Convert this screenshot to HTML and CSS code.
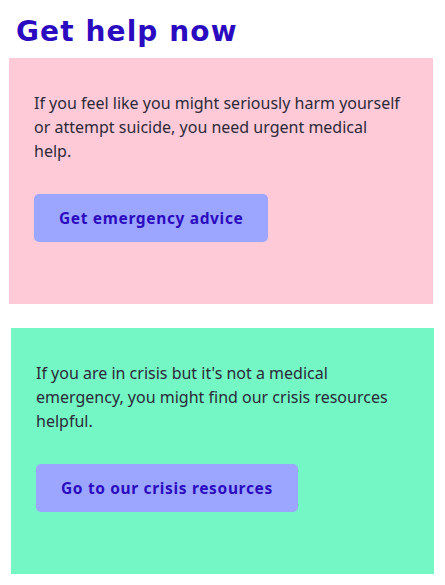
FILE: index.html
```html
<!DOCTYPE html>
<html lang="en">
<head>
<meta charset="utf-8">
<title>Get help now</title>
<link rel="stylesheet" href="styles.css">
</head>
<body>
<main class="page">
  <h1 class="title">Get help now</h1>
  <section class="card card-pink">
    <p class="card-text">If you feel like you might seriously harm yourself or attempt suicide, you need urgent medical help.</p>
    <a class="btn" href="#">Get emergency advice</a>
  </section>
  <section class="card card-green">
    <p class="card-text">If you are in crisis but it's not a medical emergency, you might find our crisis resources helpful.</p>
    <a class="btn" href="#">Go to our crisis resources</a>
  </section>
</main>
</body>
</html>
```

FILE: styles.css
```css
html, body {
  margin: 0;
  padding: 0;
  background: #ffffff;
}
body {
  font-family: "Noto Sans", "Liberation Sans", sans-serif;
  color: #2b2a38;
}
.page {
  display: flex;
  flex-direction: column;
  padding: 0 12px 0 9px;
}
.title {
  margin: 12px 0 0 7px;
  font-family: "DejaVu Sans", sans-serif;
  font-size: 28px;
  font-weight: 700;
  line-height: 40px;
  color: #2b0bbf;
  letter-spacing: 1.1px;
}
.card {
  display: flex;
  flex-direction: column;
  align-items: flex-start;
  padding: 33px 24px 62px 25px;
}
.card-pink {
  margin-top: 6px;
  background: #ffcad8;
}
.card-green {
  margin-top: 24px;
  margin-left: 2px;
  margin-right: -1px;
  background: #74f7c4;
}
.card-text {
  max-width: 370px;
  margin: 0 0 31px 0;
  font-size: 16px;
  line-height: 24px;
  letter-spacing: 0;
}
.btn {
  display: inline-flex;
  align-items: center;
  height: 48px;
  padding: 0 25px;
  border-radius: 5px;
  background: #9ca6ff;
  color: #2b0bbf;
  font-weight: 700;
  font-size: 15.5px;
  text-decoration: none;
  letter-spacing: 0.65px;
}
```
